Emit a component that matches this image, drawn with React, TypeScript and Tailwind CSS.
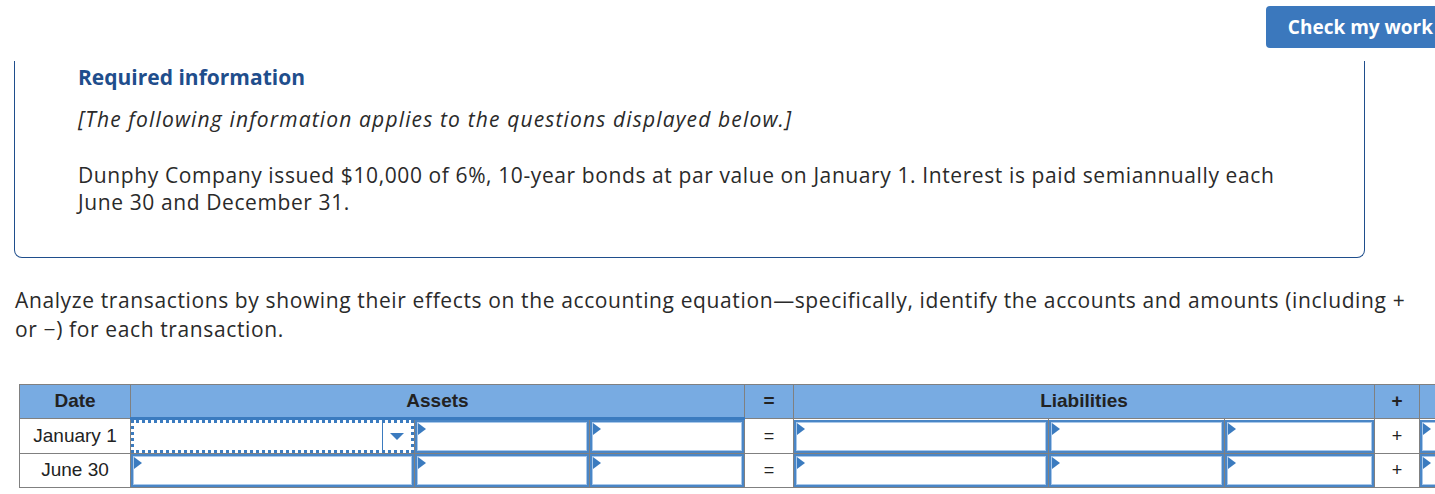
import React from 'react';

const sans = { fontFamily: '"Open Sans", "Lato", sans-serif' };
const arial = { fontFamily: '"Liberation Sans", Arial, sans-serif' };

function Flag() {
  return (
    <span className="absolute left-[1px] top-[1px] w-0 h-0 border-t-[6px] border-b-[6px] border-l-[8px] border-t-transparent border-b-transparent border-l-[#3b7bbf]" />
  );
}

function InputCell() {
  return (
    <td className="border border-[#808080] p-0 relative">
      <div className="h-[33px] border-2 border-[#4a86c6] shadow-[inset_0_0_0_1px_#a9c8ea] bg-white relative">
        <Flag />
      </div>
    </td>
  );
}

function DropdownCell() {
  return (
    <td className="border border-[#808080] p-0 relative">
      <div className="h-[33px] border-[3px] border-dotted border-[#3b7bbf] bg-white flex">
        <div className="flex-1" />
        <div className="w-[29px] border-l border-[#3b7bbf] flex items-center justify-center">
          <span className="w-0 h-0 border-l-[7px] border-r-[7px] border-t-[7px] border-l-transparent border-r-transparent border-t-[#3b7bbf]" />
        </div>
      </div>
    </td>
  );
}

function SignCell({ sign }: { sign: string }) {
  return (
    <td className="border border-[#808080] bg-white text-center text-[18px] text-[#222]">{sign}</td>
  );
}

function BodyRow({ date, focused }: { date: string; focused?: boolean }) {
  return (
    <tr className="h-[34px]">
      <td className="border border-[#808080] text-center text-[19px] text-[#222]">{date}</td>
      {focused ? <DropdownCell /> : <InputCell />}
      <InputCell />
      <InputCell />
      <SignCell sign="=" />
      <InputCell />
      <InputCell />
      <InputCell />
      <SignCell sign="+" />
      <InputCell />
    </tr>
  );
}

export default function App() {
  return (
    <div className="w-[1435px] h-[494px] overflow-hidden bg-white relative" style={sans}>
      <div className="flex justify-end pt-[6px]">
        <button className="h-[42px] pl-[22px] pr-[22px] -mr-[20px] rounded-[4px] bg-[#3b78bd] text-white font-bold text-[19px]">
          Check my work
        </button>
      </div>

      <div className="ml-[14px] w-[1351px] h-[197px] mt-[13px] border-x border-b border-[#1f4e8c] rounded-b-[8px] pl-[63px] pt-[2px] text-[#2a2a2a]">
        <div className="text-[#1f4e8c] font-bold text-[21px] leading-[28px]">Required information</div>
        <div className="italic text-[21px] leading-[28px] mt-[14px] tracking-[1.15px]">
          [The following information applies to the questions displayed below.]
        </div>
        <p className="text-[21px] leading-[27px] mt-[29px] pr-[50px] tracking-[0.6px]">
          Dunphy Company issued $10,000 of 6%, 10-year bonds at par value on January 1. Interest is paid semiannually each June 30 and December 31.
        </p>
      </div>

      <p className="ml-[15px] mt-[28px] w-[1410px] text-[21px] leading-[29px] text-[#2a2a2a] tracking-[0.62px]">
        Analyze transactions by showing their effects on the accounting equation—specifically, identify the accounts and amounts (including + or −) for each transaction.
      </p>

      <table className="ml-[19px] mt-[40px] border-collapse table-fixed w-[1460px]" style={arial}>
        <colgroup>
          <col className="w-[111px]" />
          <col className="w-[284px]" />
          <col className="w-[175px]" />
          <col className="w-[155px]" />
          <col className="w-[49px]" />
          <col className="w-[255px]" />
          <col className="w-[176px]" />
          <col className="w-[150px]" />
          <col className="w-[45px]" />
          <col className="w-[60px]" />
        </colgroup>
        <thead>
          <tr className="h-[34px] bg-[#78abe2] text-[#222] font-bold text-[19px]">
            <th className="border border-[#808080]">Date</th>
            <th colSpan={3} className="border border-[#808080] border-b-[3px] border-b-[#3b7bbf] border-b-dotted">Assets</th>
            <th className="border border-[#808080]">=</th>
            <th colSpan={3} className="border border-[#808080]">Liabilities</th>
            <th className="border border-[#808080]">+</th>
            <th className="border border-[#808080]"></th>
          </tr>
        </thead>
        <tbody>
          <BodyRow date="January 1" focused />
          <BodyRow date="June 30" />
        </tbody>
      </table>
    </div>
  );
}
